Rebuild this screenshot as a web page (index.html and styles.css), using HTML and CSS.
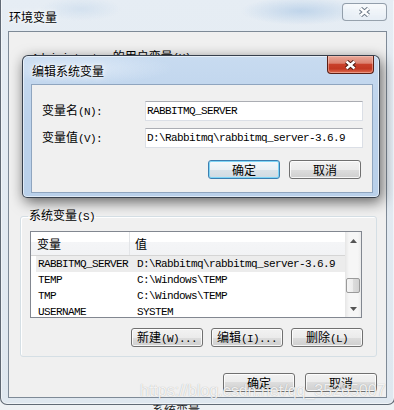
FILE: index.html
```html
<!DOCTYPE html>
<html lang="zh-CN">
<head>
    <meta charset="UTF-8">
    <meta name="viewport" content="width=device-width, initial-scale=1.0">
    <title>环境变量</title>
    <link rel="stylesheet" href="styles.css">
</head>
<body>
    <div class="under">系统变量</div>

    <div class="window outer">
        <div class="titlebar">
            <span class="title">环境变量</span>
            <div class="close close-inactive">
                <svg width="13" height="10" viewBox="0 0 13 10"><path d="M2.5 1.5 L10.5 8.5 M10.5 1.5 L2.5 8.5" stroke="#6b7785" stroke-width="4.4"/><path d="M2.5 1.5 L10.5 8.5 M10.5 1.5 L2.5 8.5" stroke="#fff" stroke-width="2.4"/></svg>
            </div>
        </div>
        <div class="client">
            <div class="section-label"><span class="en">Administrator</span> 的用户变量<span class="en">(U)</span></div>
            <div class="listbox user-list"></div>

            <fieldset class="group">
                <legend>系统变量<span class="en">(S)</span></legend>
                <div class="listbox">
                    <div class="list-main">
                        <div class="list-head">
                            <div class="head-name">变量</div>
                            <div class="head-value">值</div>
                        </div>
                        <div class="row selected"><div class="cell-name en">RABBITMQ_SERVER</div><div class="cell-value en">D:\Rabbitmq\rabbitmq_server-3.6.9</div></div>
                        <div class="row"><div class="cell-name en">TEMP</div><div class="cell-value en">C:\Windows\TEMP</div></div>
                        <div class="row"><div class="cell-name en">TMP</div><div class="cell-value en">C:\Windows\TEMP</div></div>
                        <div class="row"><div class="cell-name en">USERNAME</div><div class="cell-value en">SYSTEM</div></div>
                    </div>
                    <div class="scrollbar">
                        <div class="arrow"><svg width="7" height="4" viewBox="0 0 7 4"><path d="M0 4 L3.5 0 L7 4Z" fill="#555"/></svg></div>
                        <div class="track"><div class="thumb"></div></div>
                        <div class="arrow"><svg width="7" height="4" viewBox="0 0 7 4"><path d="M0 0 L3.5 4 L7 0Z" fill="#555"/></svg></div>
                    </div>
                </div>
                <div class="btn-row">
                    <button class="btn">新建<span class="en">(W)...</span></button>
                    <button class="btn">编辑<span class="en">(I)...</span></button>
                    <button class="btn">删除<span class="en">(L)</span></button>
                </div>
            </fieldset>

            <div class="btn-row footer">
                <button class="btn">确定</button>
                <button class="btn">取消</button>
            </div>
        </div>
    </div>

    <div class="window dialog">
        <div class="titlebar">
            <span class="title">编辑系统变量</span>
            <div class="close close-active">
                <svg width="13" height="10" viewBox="0 0 13 10"><path d="M2.5 1.5 L10.5 8.5 M10.5 1.5 L2.5 8.5" stroke="#4a1a12" stroke-width="4.4"/><path d="M2.5 1.5 L10.5 8.5 M10.5 1.5 L2.5 8.5" stroke="#fff" stroke-width="2.4"/></svg>
            </div>
        </div>
        <div class="client">
            <div class="form">
                <label>变量名<span class="en">(N):</span></label>
                <input class="textbox" type="text" value="RABBITMQ_SERVER">
                <label>变量值<span class="en">(V):</span></label>
                <input class="textbox" type="text" value="D:\Rabbitmq\rabbitmq_server-3.6.9">
            </div>
            <div class="btn-row dialog-buttons">
                <button class="btn default">确定</button>
                <button class="btn">取消</button>
            </div>
        </div>
    </div>

    <div class="watermark">https://blog.csdn.net/qq_35265007</div>
</body>
</html>
```

FILE: styles.css
```css
body {
    margin: 0;
    width: 394px;
    height: 410px;
    overflow: hidden;
    position: relative;
    background: #eef1f4;
    font-family: "Noto Sans CJK SC", "Liberation Sans", sans-serif;
    font-size: 12px;
    line-height: 14px;
    color: #000;
}
.en {
    font-family: "Liberation Mono", "Noto Sans CJK SC", monospace;
    font-size: 11px;
    letter-spacing: -0.6px;
}
.under {
    position: absolute;
    left: 152px;
    top: 403px;
    color: #222;
}

/* windows */
.window {
    position: absolute;
    box-sizing: border-box;
    display: flex;
    flex-direction: column;
}
.outer {
    left: 0;
    top: -6px;
    width: 395px;
    height: 411px;
    padding: 0 7px 6px 7px;
    border: 1px solid rgba(40, 50, 62, 0.7);
    border-radius: 7px;
    background:
        radial-gradient(ellipse 60px 14px at 300px 16px, rgba(175, 202, 230, 0.7), transparent),
        radial-gradient(ellipse 40px 12px at 80px 14px, rgba(200, 218, 236, 0.6), transparent),
        linear-gradient(#e6edf4, #dfe7ef);
    box-shadow: inset 0 0 0 1px rgba(255, 255, 255, 0.5);
}
.outer .titlebar {
    height: 36px;
    padding: 15px 0 0 1px;
    box-sizing: border-box;
    position: relative;
}
.title {
    line-height: 13px;
    text-shadow: 0 0 6px #fff, 0 0 3px #fff;
}
.close {
    position: absolute;
    top: 8px;
    right: 0;
    width: 45px;
    height: 18px;
    box-sizing: border-box;
    display: flex;
    justify-content: center;
    align-items: center;
}
.close-inactive {
    border: 1px solid rgba(110, 124, 140, 0.7);
    border-radius: 4px;
    background: linear-gradient(rgba(255, 255, 255, 0.7), rgba(230, 238, 246, 0.4));
}
.client {
    flex: 1;
    background: #f0f0f0;
    border: 1px solid #7e8a97;
    box-sizing: border-box;
    padding: 0 9px 0 11px;
}

.section-label {
    margin: 17px 0 0 12px;
    line-height: 14px;
}
.user-list {
    margin: 6px 0 0 10px;
    height: 87px;
}

/* group box */
.group {
    margin: 51px 0 0 0;
    padding: 0 13px 9px 9px;
    width: 357px;
    box-sizing: border-box;
    min-width: 0;
    border: 1px solid #d5dfe5;
    border-radius: 3px;
    box-shadow: inset 1px 1px 0 #fff;
}
.group legend {
    padding: 0 1px;
    margin-left: -2px;
    line-height: 12px;
}

/* list view */
.listbox {
    width: 332px;
    height: 87px;
    box-sizing: border-box;
    border: 1px solid #828790;
    background: #fff;
    display: flex;
}
.group .listbox {
    margin-top: 8px;
}
.list-main {
    flex: 1;
    overflow: hidden;
}
.list-head {
    display: flex;
    height: 24px;
    box-sizing: border-box;
    border-bottom: 1px solid #d5d5d5;
    background: linear-gradient(#fff 0, #fff 42%, #f4f5f7 42%, #f2f3f5 100%);
}
.head-name {
    width: 99px;
    padding: 5px 0 0 6px;
    box-sizing: border-box;
    border-right: 1px solid #e3e5e8;
}
.head-value {
    padding: 5px 0 0 5px;
}
.row {
    display: flex;
    height: 16px;
    line-height: 16px;
    margin-left: 5px;
    white-space: nowrap;
}
.row.selected {
    background: #ececec;
}
.cell-name {
    width: 100px;
    padding-left: 2px;
    box-sizing: border-box;
}
.cell-value {
    padding-left: 1px;
}
.scrollbar {
    width: 16px;
    display: flex;
    flex-direction: column;
    background: linear-gradient(90deg, #e6e6e6, #f6f6f6 25%, #f6f6f6 80%, #ebebeb);
}
.arrow {
    height: 17px;
    display: flex;
    justify-content: center;
    align-items: center;
}
.track {
    flex: 1;
    padding: 29px 1px 0 1px;
}
.thumb {
    height: 15px;
    box-sizing: border-box;
    border: 1px solid #9a9a9a;
    border-radius: 2px;
    background: linear-gradient(90deg, #f5f5f5, #ececec 50%, #dcdcdc 50%, #d2d2d2);
}

/* buttons */
.btn-row {
    display: flex;
    justify-content: flex-end;
    gap: 8px;
    margin-top: 10px;
}
.btn {
    width: 72px;
    height: 19px;
    padding: 0;
    box-sizing: border-box;
    border: 1px solid #707070;
    border-radius: 3px;
    background: linear-gradient(#f2f2f2 0, #ebebeb 50%, #dddddd 50%, #cfcfcf 100%);
    box-shadow: inset 0 0 0 1px rgba(255, 255, 255, 0.8);
    font-family: "Noto Sans CJK SC", "Liberation Sans", sans-serif;
    font-size: 12px;
    line-height: 16px;
    color: #000;
}
.btn.default {
    border-color: #3c7fb1;
    box-shadow: inset 0 0 0 1px #7fd5f6;
    background: linear-gradient(#f4f8fb 0, #eaf0f4 50%, #dbe3e9 50%, #d0dae2 100%);
}
.footer {
    margin: 16px 0 0 0;
    gap: 10px;
}

/* edit dialog */
.dialog {
    left: 22px;
    top: 55px;
    width: 358px;
    height: 143px;
    padding: 0 6px 4px 8px;
    border: 1px solid rgba(30, 38, 48, 0.85);
    border-radius: 6px 6px 5px 5px;
    background:
        radial-gradient(ellipse 90px 16px at 60px 12px, rgba(225, 236, 248, 0.8), transparent),
        linear-gradient(#c8dbf0, #bcd2eb 45%, #b9d0ea);
    box-shadow: inset 0 0 0 1px rgba(255, 255, 255, 0.55), 2px 4px 14px rgba(0, 0, 0, 0.6);
}
.dialog .titlebar {
    height: 28px;
    padding: 8px 0 0 1px;
    box-sizing: border-box;
    position: relative;
}
.close-active {
    top: 0;
    right: -1px;
    width: 47px;
    border: 1px solid #5a1f15;
    border-top: none;
    border-radius: 0 0 4px 4px;
    background: linear-gradient(#e9a899 0, #dc8270 42%, #c8402a 50%, #c23822 75%, #df6c50 100%);
    box-shadow: inset 0 0 0 1px rgba(255, 210, 200, 0.45);
}
.dialog .client {
    border-color: #8fa5bf;
    padding: 16px 9px 0 10px;
}
.form {
    display: grid;
    grid-template-columns: 103px 218px;
    row-gap: 7px;
    align-items: center;
}
.textbox {
    height: 20px;
    box-sizing: border-box;
    margin: 0;
    padding: 0 1px;
    border: 1px solid #dbdfe6;
    border-top-color: #abadb3;
    background: #fff;
    font-family: "Liberation Mono", monospace;
    font-size: 11px;
    letter-spacing: -0.6px;
    color: #000;
    outline: none;
}
.dialog-buttons {
    margin: 12px 2px 0 0;
    gap: 9px;
}

.watermark {
    position: absolute;
    left: 140px;
    top: 383px;
    font-family: "Liberation Sans", sans-serif;
    font-size: 16px;
    line-height: 16px;
    color: rgba(255, 255, 255, 0.85);
    text-shadow: 0 0 1px rgba(0, 0, 0, 0.3);
    white-space: nowrap;
}
```
